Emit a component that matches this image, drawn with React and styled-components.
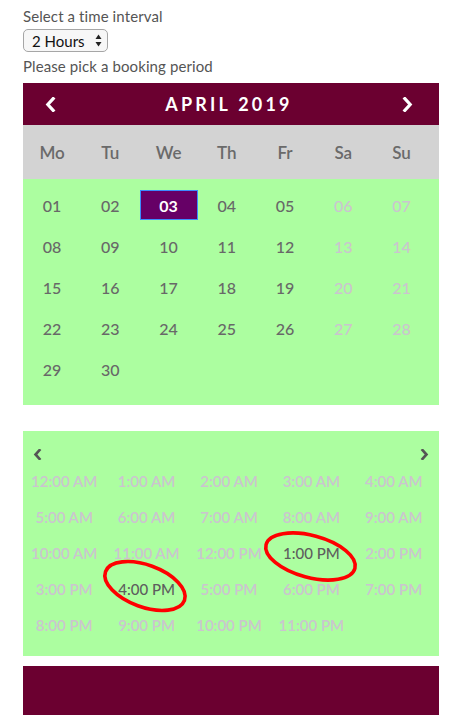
import React from "react";
import styled, { createGlobalStyle } from "styled-components";

const GlobalStyle = createGlobalStyle`
  html, body { margin: 0; padding: 0; background: #fff; }
  body { font-family: Lato, "Open Sans", sans-serif; }
`;

const Page = styled.div`
  width: 416px;
  padding: 6px 20px 10px 23px;
`;

const Label = styled.div`
  font-size: 15px;
  line-height: 20px;
  color: #555;
  letter-spacing: 0.1px;
`;

const SelectWrap = styled.div`
  position: relative;
  width: 85px;
  height: 23px;
  margin: 3px 0 4px;
`;

const Select = styled.select`
  appearance: none;
  -webkit-appearance: none;
  width: 100%;
  height: 100%;
  box-sizing: border-box;
  border: 1px solid #a6a6a6;
  border-radius: 5px;
  background: #f7f7f7;
  font-family: Lato, sans-serif;
  font-size: 15px;
  color: #111;
  padding: 0 0 0 8px;
  outline: none;
`;

const SelectArrows = styled.svg`
  position: absolute;
  right: 6px;
  top: 5px;
  pointer-events: none;
`;

const Calendar = styled.div`
  margin-top: 7px;
`;

const Header = styled.div`
  height: 42px;
  background: #6b0030;
  display: flex;
  align-items: center;
  justify-content: space-between;
  padding: 0 26px 0 22px;
`;

const MonthTitle = styled.div`
  color: #fff;
  font-size: 18px;
  font-weight: 700;
  letter-spacing: 3.2px;
`;

const WeekRow = styled.div`
  height: 54px;
  background: #d3d3d3;
  display: flex;
  align-items: center;
`;

const WeekDay = styled.div`
  width: 14%;
  text-align: center;
  font-size: 17px;
  font-weight: 600;
  color: #6a6a6a;
`;

const DaysGrid = styled.div`
  background: #acfea0;
  display: flex;
  flex-wrap: wrap;
  padding: 5px 0 16px;
`;

const Day = styled.div`
  width: 14%;
  height: 41px;
  display: flex;
  align-items: center;
  justify-content: center;
`;

const DayInner = styled.div`
  width: 58px;
  height: 30px;
  box-sizing: border-box;
  display: flex;
  align-items: center;
  justify-content: center;
  font-size: 16px;
  padding-top: 2px;
  color: ${(p) => (p.$selected ? "#fff" : p.$disabled ? "#cbc4cf" : "#686868")};
  background: ${(p) => (p.$selected ? "#660066" : "transparent")};
  border: 1px solid ${(p) => (p.$selected ? "#3b8cff" : "transparent")};
  font-weight: ${(p) => (p.$selected ? 700 : 500)};
`;

const TimeBox = styled.div`
  position: relative;
  margin-top: 26px;
  background: #acfea0;
  padding: 16px 4px 13px 0;
`;

const TimeNav = styled.div`
  height: 14px;
  display: flex;
  align-items: center;
  justify-content: space-between;
  padding: 0 6px 0 10px;
  margin-bottom: 2px;
`;

const TimeGrid = styled.div`
  display: grid;
  grid-template-columns: repeat(5, 1fr);
  grid-auto-rows: 36px;
`;

const Time = styled.div`
  display: flex;
  align-items: center;
  justify-content: center;
  font-size: 15px;
  white-space: nowrap;
  color: ${(p) => (p.$active ? "#5e5e5e" : "#cbc4cf")};
  font-weight: ${(p) => (p.$active ? 500 : 600)};
`;

const Annotations = styled.svg`
  position: absolute;
  left: 0;
  top: 0;
  pointer-events: none;
  overflow: visible;
`;

const Footer = styled.div`
  margin-top: 10px;
  height: 49px;
  background: #6b0030;
`;

const Chevron = ({ dir, color, w, h, sw }) => (
  <svg width={w} height={h} viewBox="0 0 10 14">
    <path
      d={dir === "left" ? "M7.5 1.5 L2.5 7 L7.5 12.5" : "M2.5 1.5 L7.5 7 L2.5 12.5"}
      fill="none"
      stroke={color}
      strokeWidth={sw}
      strokeLinecap="square"
      strokeLinejoin="miter"
    />
  </svg>
);

const weekDays = ["Mo", "Tu", "We", "Th", "Fr", "Sa", "Su"];
const days = Array.from({ length: 30 }, (_, i) => i + 1);
const times = [];
for (let h = 0; h < 24; h++) {
  const hr = h % 12 === 0 ? 12 : h % 12;
  times.push(`${hr}:00 ${h < 12 ? "AM" : "PM"}`);
}

export default function App() {
  return (
    <>
      <GlobalStyle />
      <Page>
        <Label>Select a time interval</Label>
        <SelectWrap>
          <Select defaultValue="2">
            <option value="1">1 Hour</option>
            <option value="2">2 Hours</option>
            <option value="3">3 Hours</option>
          </Select>
          <SelectArrows width="7" height="13" viewBox="0 0 7 13">
            <path d="M3.5 0.5 L6.5 5 L0.5 5 Z" fill="#222" />
            <path d="M3.5 12.5 L6.5 8 L0.5 8 Z" fill="#222" />
          </SelectArrows>
        </SelectWrap>
        <Label>Please pick a booking period</Label>
        <Calendar>
          <Header>
            <Chevron dir="left" color="#fff" w={11} h={15} sw={3} />
            <MonthTitle>APRIL 2019</MonthTitle>
            <Chevron dir="right" color="#fff" w={11} h={15} sw={3} />
          </Header>
          <WeekRow>
            {weekDays.map((d) => (
              <WeekDay key={d}>{d}</WeekDay>
            ))}
          </WeekRow>
          <DaysGrid>
            {days.map((d, i) => {
              const col = i % 7;
              return (
                <Day key={d}>
                  <DayInner $selected={d === 3} $disabled={col >= 5}>
                    {String(d).padStart(2, "0")}
                  </DayInner>
                </Day>
              );
            })}
          </DaysGrid>
        </Calendar>
        <TimeBox>
          <TimeNav>
            <Chevron dir="left" color="#555" w={9} h={11} sw={3.4} />
            <Chevron dir="right" color="#555" w={9} h={11} sw={3.4} />
          </TimeNav>
          <TimeGrid>
            {times.map((t) => (
              <Time key={t} $active={t === "1:00 PM" || t === "4:00 PM"}>
                {t}
              </Time>
            ))}
          </TimeGrid>
          <Annotations width="416" height="225">
            <ellipse
              cx="287.5"
              cy="125.5"
              rx="46"
              ry="21"
              transform="rotate(15 287.5 125.5)"
              fill="none"
              stroke="#f00"
              strokeWidth="3.6"
            />
            <ellipse
              cx="122"
              cy="155"
              rx="42"
              ry="21"
              transform="rotate(20 122 155)"
              fill="none"
              stroke="#f00"
              strokeWidth="3.6"
            />
          </Annotations>
        </TimeBox>
        <Footer />
      </Page>
    </>
  );
}
